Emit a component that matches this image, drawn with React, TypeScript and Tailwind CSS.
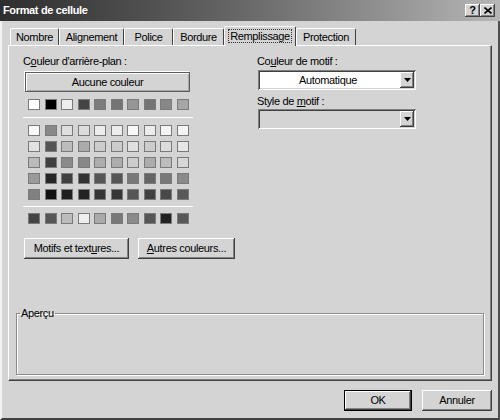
import React from 'react';

const raised =
  'shadow-[inset_-1px_-1px_0_#404040,inset_1px_1px_0_#ffffff,inset_-2px_-2px_0_#808080,inset_2px_2px_0_#d4d4d4]';
const sunken =
  'shadow-[inset_1px_1px_0_#808080,inset_-1px_-1px_0_#ffffff,inset_2px_2px_0_#404040,inset_-2px_-2px_0_#d4d4d4]';

const topRow = ['#ffffff', '#000000', '#eeeeee', '#444444', '#7c7c7c', '#747474', '#969696', '#747474', '#888888', '#a6a6a6'];

const grid = [
  ['#fafafa', '#888888', '#dedede', '#dcdcdc', '#ececec', '#ececec', '#f8f8f8', '#ececec', '#f4f4f4', '#f4f4f4'],
  ['#e2e2e2', '#545454', '#bcbcbc', '#ababab', '#cccccc', '#cccccc', '#e0e0e0', '#cccccc', '#dcdcdc', '#e6e6e6'],
  ['#bababa', '#404040', '#8a8a8a', '#888888', '#acacac', '#acacac', '#cccccc', '#acacac', '#bcbcbc', '#d6d6d6'],
  ['#9a9a9a', '#262626', '#404040', '#333333', '#565656', '#565656', '#787878', '#646464', '#787878', '#8a8a8a'],
  ['#808080', '#121212', '#202020', '#222222', '#363636', '#363636', '#565656', '#404040', '#484848', '#585858'],
];

const bottomRow = ['#444444', '#565656', '#bcbcbc', '#eeeeee', '#aaaaaa', '#787878', '#8a8a8a', '#565656', '#222222', '#585858'];

const tabs = [
  { label: 'Nombre', w: 'w-[49px]' },
  { label: 'Alignement', w: 'w-[65px]' },
  { label: 'Police', w: 'w-[49px]' },
  { label: 'Bordure', w: 'w-[51px]' },
  { label: 'Remplissage', w: 'w-[72px]', active: true },
  { label: 'Protection', w: 'w-[60px]' },
];

const SwatchRow = ({ colors }: { colors: string[] }) => (
  <div className="flex justify-between w-[161px] ml-[5px]">
    {colors.map((c, i) => (
      <div key={i} className="w-[12px] h-[11px] border border-[#7a7a7a]" style={{ backgroundColor: c }} />
    ))}
  </div>
);

const Arrow = () => (
  <svg width="7" height="4" viewBox="0 0 7 4">
    <path d="M0 0h7L3.5 4z" fill="#000" />
  </svg>
);

const Combo = ({ value, disabled }: { value?: string; disabled?: boolean }) => (
  <div
    className={`flex h-[20px] w-[158px] ${sunken} ${disabled ? 'bg-[#d4d4d4]' : 'bg-white'}`}
  >
    <div className="flex-1 flex items-center justify-center pr-[2px]">{value}</div>
    <div className={`w-[14px] h-[16px] mt-[2px] mr-[2px] bg-[#d4d4d4] flex items-center justify-center ${raised}`}>
      <Arrow />
    </div>
  </div>
);

const Btn = ({ children, w, isDefault }: { children: React.ReactNode; w: string; isDefault?: boolean }) => (
  <div
    className={`${w} h-[21px] bg-[#d4d4d4] flex items-center justify-center ${
      isDefault ? 'border border-black' : ''
    } ${raised}`}
  >
    {children}
  </div>
);

export default function App() {
  return (
    <div
      className="w-[500px] h-[420px] bg-[#d4d4d4] flex flex-col text-[11px] tracking-[-0.35px] text-black select-none"
      style={{ fontFamily: '"Liberation Sans", Arial, sans-serif' }}
    >
      {/* Title bar */}
      <div className="h-[21px] flex items-center bg-linear-to-r from-[#2e2e2e] via-[#6a6a6a] to-[#b6b6b6] pl-[3px] pr-[5px]">
        <span className="text-white font-bold text-[11px] flex-1">Format de cellule</span>
        <div className={`w-[15px] h-[13px] bg-[#d4d4d4] flex items-center justify-center font-bold text-[11px] leading-none ${raised}`}>
          ?
        </div>
        <div className={`w-[15px] h-[13px] bg-[#d4d4d4] flex items-center justify-center ${raised}`}>
          <svg width="8" height="7" viewBox="0 0 8 7">
            <path d="M0.5 0.5l7 6M7.5 0.5l-7 6" stroke="#000" strokeWidth="1.6" />
          </svg>
        </div>
      </div>

      {/* Body */}
      <div className="flex-1 flex flex-col border-l-[2px] border-l-[#f2f2f2] border-r-[2px] border-r-[#505050] border-b-[2px] border-b-[#404040] px-[6px]">
        {/* Tabs */}
        <div className="h-[19px] mt-[5px] flex items-end pl-[2px]">
          {tabs.map((t) =>
            t.active ? (
              <div
                key={t.label}
                className={`${t.w} h-[20px] -mb-[1px] relative z-10 bg-[#d4d4d4] border-t border-l border-white border-r border-r-[#404040] rounded-t-[2px] flex items-center justify-center pb-[2px]`}
              >
                <span className="border border-dotted border-[#303030] px-[1px] leading-[12px]">{t.label}</span>
              </div>
            ) : (
              <div
                key={t.label}
                className={`${t.w} h-[17px] bg-[#d4d4d4] border-t border-l border-white border-r border-r-[#404040] rounded-t-[2px] flex items-center justify-center`}
              >
                {t.label}
              </div>
            )
          )}
        </div>

        {/* Panel */}
        <div className="h-[336px] flex flex-col border-t border-l border-white border-r border-b border-r-[#404040] border-b-[#404040] shadow-[inset_-1px_-1px_0_#808080]">
          <div className="flex pt-[9px] pl-[14px]">
            {/* Left column */}
            <div className="w-[212px] flex flex-col">
              <div className="h-[13px] leading-[13px]">
                C<span className="underline">o</span>uleur d'arrière-plan :
              </div>
              <div className="mt-[4px] ml-[2px] w-[165px] h-[20px] border border-[#5c5c5c] shadow-[-1px_-1px_0_#ffffff,inset_1px_1px_0_#ffffff,inset_-1px_-1px_0_#a8a8a8] flex items-center justify-center">
                Aucune couleur
              </div>
              <div className="mt-[7px]">
                <SwatchRow colors={topRow} />
              </div>
              <div className="mt-[7px] w-[170px] h-[1px] bg-white" />
              <div className="mt-[7px] flex flex-col gap-[5px]">
                {grid.map((row, i) => (
                  <SwatchRow key={i} colors={row} />
                ))}
              </div>
              <div className="mt-[6px] w-[170px] h-[1px] bg-white" />
              <div className="mt-[6px]">
                <SwatchRow colors={bottomRow} />
              </div>
              <div className="mt-[14px] ml-[1px] flex gap-[9px]">
                <Btn w="w-[105px]">
                  Motifs et text<span className="underline">u</span>res...
                </Btn>
                <Btn w="w-[97px]">
                  <span className="underline">A</span>utres couleurs...
                </Btn>
              </div>
            </div>

            {/* Right column */}
            <div className="ml-[22px] flex flex-col">
              <div className="h-[13px] leading-[13px]">
                Co<span className="underline">u</span>leur de motif :
              </div>
              <div className="mt-[2px] ml-[1px]">
                <Combo value="Automatique" />
              </div>
              <div className="mt-[5px] h-[13px] leading-[13px]">
                Style de <span className="underline">m</span>otif :
              </div>
              <div className="mt-[1px] ml-[1px]">
                <Combo disabled />
              </div>
            </div>
          </div>

          {/* Preview group */}
          <fieldset className="mt-auto mx-[7px] mb-[5px] h-[67px] border border-[#8c8c8c] shadow-[inset_1px_1px_0_#ffffff,1px_1px_0_#ffffff]">
            <legend className="ml-[3px] px-[1px] leading-[11px]">Aperçu</legend>
          </fieldset>
        </div>

        {/* Dialog buttons */}
        <div className="mt-[9px] flex justify-end gap-[10px]">
          <Btn w="w-[68px]" isDefault>
            OK
          </Btn>
          <Btn w="w-[70px]">Annuler</Btn>
        </div>
      </div>
    </div>
  );
}
